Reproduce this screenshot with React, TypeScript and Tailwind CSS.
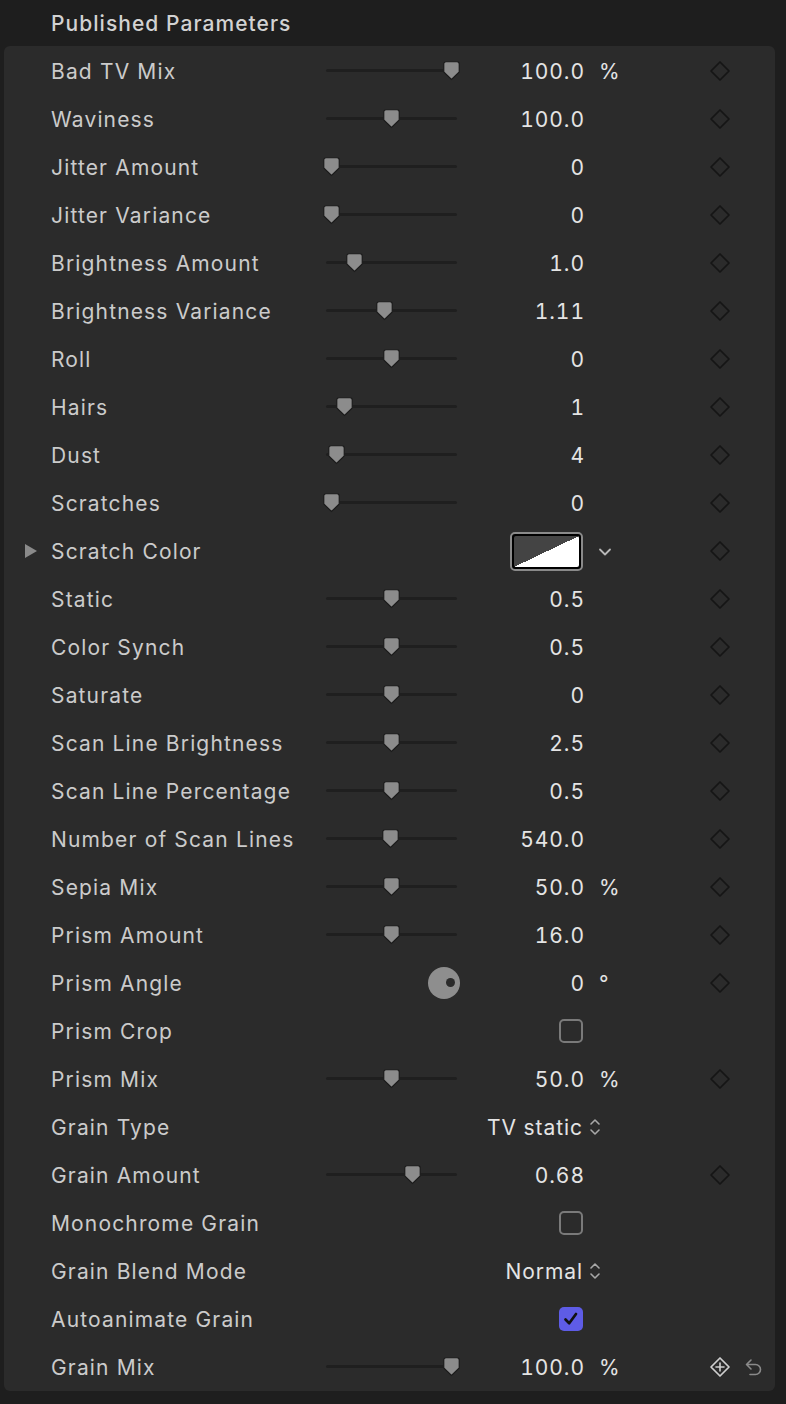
import React from "react";

type Row = {
  label: string;
  kind: "slider" | "color" | "dial" | "check" | "popup";
  pos?: number; // thumb center x, 331..451
  value?: string;
  unit?: string;
  checked?: boolean;
  disclosure?: boolean;
  keyframe?: boolean;
  last?: boolean;
};

const rows: Row[] = [
  { label: "Bad TV Mix", kind: "slider", pos: 451, value: "100.0", unit: "%" },
  { label: "Waviness", kind: "slider", pos: 391, value: "100.0" },
  { label: "Jitter Amount", kind: "slider", pos: 331, value: "0" },
  { label: "Jitter Variance", kind: "slider", pos: 331, value: "0" },
  { label: "Brightness Amount", kind: "slider", pos: 354, value: "1.0" },
  { label: "Brightness Variance", kind: "slider", pos: 384, value: "1.11" },
  { label: "Roll", kind: "slider", pos: 391, value: "0" },
  { label: "Hairs", kind: "slider", pos: 344, value: "1" },
  { label: "Dust", kind: "slider", pos: 336, value: "4" },
  { label: "Scratches", kind: "slider", pos: 331, value: "0" },
  { label: "Scratch Color", kind: "color", disclosure: true },
  { label: "Static", kind: "slider", pos: 391, value: "0.5" },
  { label: "Color Synch", kind: "slider", pos: 391, value: "0.5" },
  { label: "Saturate", kind: "slider", pos: 391, value: "0" },
  { label: "Scan Line Brightness", kind: "slider", pos: 391, value: "2.5" },
  { label: "Scan Line Percentage", kind: "slider", pos: 391, value: "0.5" },
  { label: "Number of Scan Lines", kind: "slider", pos: 390, value: "540.0" },
  { label: "Sepia Mix", kind: "slider", pos: 391, value: "50.0", unit: "%" },
  { label: "Prism Amount", kind: "slider", pos: 391, value: "16.0" },
  { label: "Prism Angle", kind: "dial", value: "0", unit: "°" },
  { label: "Prism Crop", kind: "check", checked: false, keyframe: false },
  { label: "Prism Mix", kind: "slider", pos: 391, value: "50.0", unit: "%" },
  { label: "Grain Type", kind: "popup", value: "TV static", keyframe: false },
  { label: "Grain Amount", kind: "slider", pos: 412, value: "0.68" },
  { label: "Monochrome Grain", kind: "check", checked: false, keyframe: false },
  { label: "Grain Blend Mode", kind: "popup", value: "Normal", keyframe: false },
  { label: "Autoanimate Grain", kind: "check", checked: true, keyframe: false },
  { label: "Grain Mix", kind: "slider", pos: 451, value: "100.0", unit: "%", last: true },
];

function Slider({ pos }: { pos: number }) {
  // track spans 326..457, thumb is 17px wide
  const left = pos - 326 - 8;
  return (
    <div className="relative h-full w-full">
      <div className="absolute left-0 right-0 top-[22px] h-[3px] rounded-full bg-[#1f1f1f]" />
      <svg
        className="absolute top-[14px]"
        style={{ left }}
        width="17"
        height="20"
        viewBox="0 0 17 20"
      >
        <path
          d="M3 0.75 H14 a2.25 2.25 0 0 1 2.25 2.25 V11 L8.5 18.5 L0.75 11 V3 a2.25 2.25 0 0 1 2.25-2.25Z"
          fill="#8c8c8c"
          stroke="#1b1b1b"
          strokeWidth="1.2"
        />
      </svg>
    </div>
  );
}

function Dial() {
  return (
    <div className="flex h-full items-center justify-end">
      <div className="relative mr-[-3px] h-[32px] w-[32px] rounded-full bg-[#8e8e8e]">
        <div className="absolute left-[18px] top-[11px] h-[9px] w-[9px] rounded-full bg-[#2b2b2b]" />
      </div>
    </div>
  );
}

function Keyframe({ add }: { add?: boolean }) {
  return (
    <svg width="22" height="22" viewBox="0 0 22 22">
      <path
        d="M11 2 L20 11 L11 20 L2 11 Z"
        fill="none"
        stroke={add ? "#cfcfcf" : "#151515"}
        strokeWidth="1.7"
        strokeLinejoin="round"
      />
      {add && (
        <path d="M11 7 V15 M7 11 H15" stroke="#cfcfcf" strokeWidth="1.6" strokeLinecap="round" />
      )}
    </svg>
  );
}

function Reset() {
  return (
    <svg width="20" height="22" viewBox="0 0 20 22">
      <path
        d="M7 4 L2.5 8.5 L7 13 M3 8.5 H11.5 a5 5 0 0 1 0 10 H6"
        fill="none"
        stroke="#8a8a8a"
        strokeWidth="1.6"
        strokeLinecap="round"
        strokeLinejoin="round"
      />
    </svg>
  );
}

function UpDown() {
  return (
    <svg width="12" height="22" viewBox="0 0 12 22">
      <path
        d="M2 8 L6 4 L10 8 M2 14 L6 18 L10 14"
        fill="none"
        stroke="#a8a8a8"
        strokeWidth="1.6"
        strokeLinecap="round"
        strokeLinejoin="round"
      />
    </svg>
  );
}

function ParamRow({ row }: { row: Row }) {
  const showKey = row.keyframe !== false;
  return (
    <div className="flex h-12 items-center">
      {/* disclosure gutter */}
      <div className="flex w-[47px] items-center pl-[20px]">
        {row.disclosure && (
          <svg width="14" height="16" viewBox="0 0 14 16">
            <path d="M1 1 L13 8 L1 15 Z" fill="#8a8a8a" />
          </svg>
        )}
      </div>
      <div className="w-[275px] truncate pt-[2px] text-[21px] tracking-[0.055em] text-[#cbcbcb]">
        {row.label}
      </div>
      <div className="h-full w-[131px]">
        {row.kind === "slider" && row.pos !== undefined && <Slider pos={row.pos} />}
        {row.kind === "dial" && <Dial />}
      </div>
      <div className="flex w-[126px] items-center justify-end text-[21px] tracking-[0.045em] text-[#e4e4e4] tabular-nums">
        {(row.kind === "slider" || row.kind === "dial") && (
          <span className="mr-[-2px] pt-[2px]">{row.value}</span>
        )}
        {row.kind === "popup" && <span className="pt-[2px]">{row.value}</span>}
        {row.kind === "color" && (
          <div className="h-[39px] w-[73px] rounded-[5px] border-2 border-[#8a8a8a] bg-black p-[2px]">
            <div
              className="h-full w-full rounded-[2px]"
              style={{ background: "linear-gradient(to bottom right, #444444 50%, #ffffff 50%)" }}
            />
          </div>
        )}
        {row.kind === "check" &&
          (row.checked ? (
            <div className="flex h-[24px] w-[24px] items-center justify-center rounded-[5px] bg-[#5e5ce6]">
              <svg width="18" height="18" viewBox="0 0 18 18">
                <path
                  d="M3.5 9.5 L7.2 13.2 L14 4"
                  fill="none"
                  stroke="#111"
                  strokeWidth="2.7"
                  strokeLinecap="round"
                  strokeLinejoin="round"
                />
              </svg>
            </div>
          ) : (
            <div className="h-[24px] w-[24px] rounded-[5px] border-2 border-[#7a7a7a]" />
          ))}
      </div>
      <div className="flex w-[50px] items-center text-[21px] text-[#e4e4e4]">
        {row.unit && <span className="pl-[16px] pt-[2px]">{row.unit}</span>}
        {row.kind === "popup" && (
          <span className="pl-[6px]">
            <UpDown />
          </span>
        )}
        {row.kind === "color" && (
          <svg className="ml-[15px] mt-[2px]" width="14" height="10" viewBox="0 0 14 10">
            <path
              d="M2 2.5 L7 7.5 L12 2.5"
              fill="none"
              stroke="#b8b8b8"
              strokeWidth="1.8"
              strokeLinecap="round"
              strokeLinejoin="round"
            />
          </svg>
        )}
      </div>
      <div className="flex items-center gap-[13px] pl-[76px]">
        {showKey && <Keyframe add={row.last} />}
        {row.last && <Reset />}
      </div>
    </div>
  );
}

export default function App() {
  return (
    <div
      className="h-[1404px] w-[786px] overflow-hidden bg-[#1e1e1e]"
      style={{ fontFamily: "Inter, 'Noto Sans', sans-serif" }}
    >
      <div className="flex h-[46px] items-center pl-[51px] pt-[2px] text-[21px] font-medium tracking-[0.05em] text-[#d2d2d2]">
        Published Parameters
      </div>
      <div className="mr-[11px] ml-[4px] rounded-[6px] bg-[#2b2b2b] pt-[1px]">
        {rows.map((r) => (
          <ParamRow key={r.label} row={r} />
        ))}
      </div>
    </div>
  );
}
